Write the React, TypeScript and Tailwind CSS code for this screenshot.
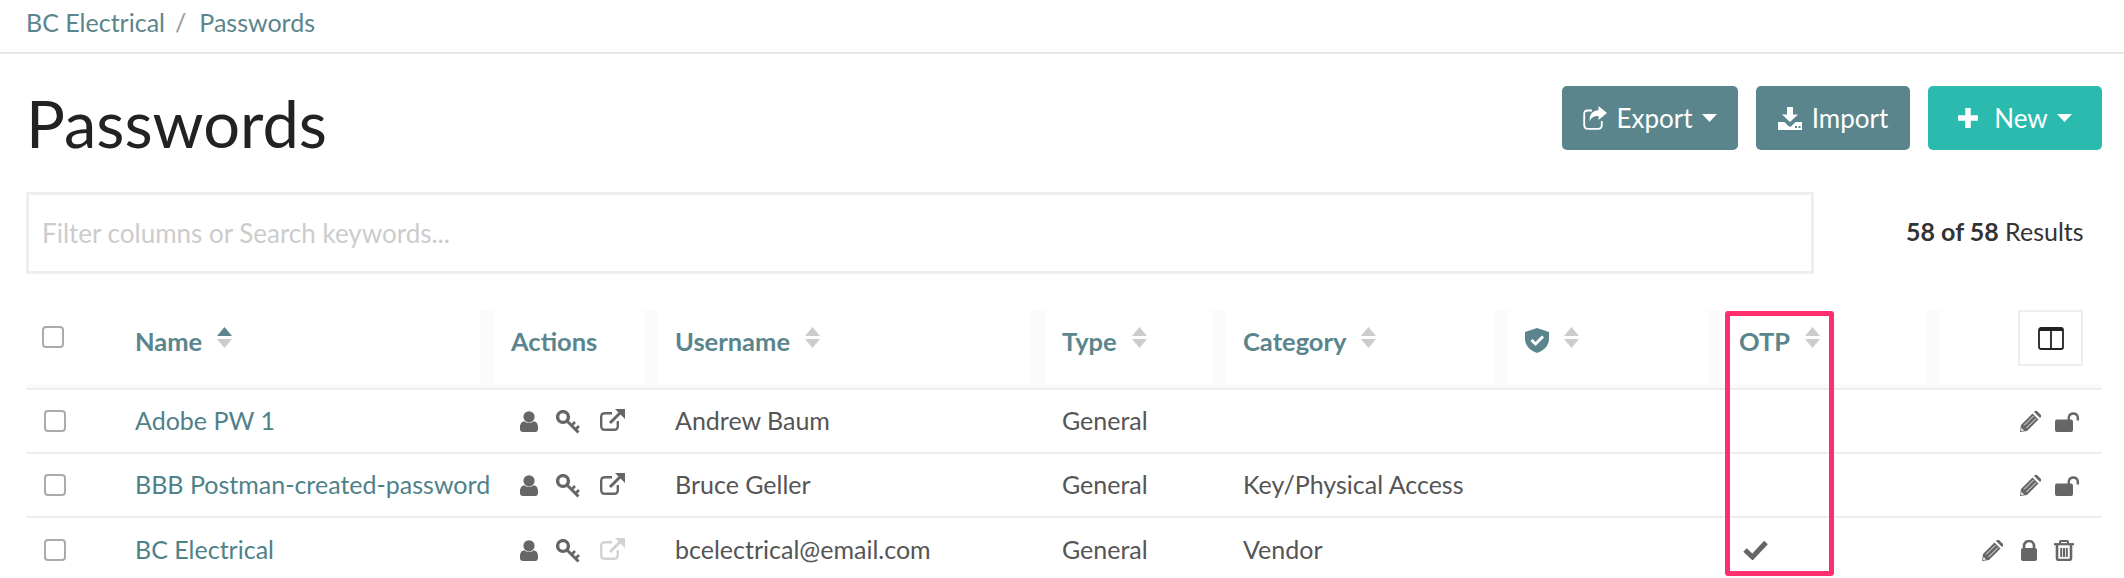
import React from "react";

const GRID = "grid grid-cols-[109px_359px_164px_387px_181px_282px_214px_218px_162px]";
const GREY = "#666666";

function Sort({ active = false }: { active?: boolean }) {
  return (
    <svg width="15" height="21" viewBox="0 0 15 21" className="ml-[15px] shrink-0">
      <polygon points="7.5,0 15,9 0,9" fill={active ? "#5a858d" : "#cccccc"} />
      <polygon points="0,12 15,12 7.5,21" fill="#cccccc" />
    </svg>
  );
}

function Caret() {
  return (
    <svg width="15" height="8" viewBox="0 0 15 8" className="shrink-0">
      <polygon points="0,0 15,0 7.5,8" fill="#ffffff" />
    </svg>
  );
}

function UserIcon() {
  return (
    <svg width="18" height="21" viewBox="0 0 18 21" className="shrink-0">
      <circle cx="9" cy="5.8" r="5.6" fill={GREY} />
      <path d="M0 16C0 12.5 2 10.3 4.4 10.2C6.5 12.2 11.5 12.2 13.6 10.2C16 10.3 18 12.5 18 16V18Q18 21 15 21H3Q0 21 0 18Z" fill={GREY} />
    </svg>
  );
}

function KeyIcon() {
  return (
    <svg width="24" height="24" viewBox="0 0 24 24" className="shrink-0 mt-[2px]" fill="none" stroke={GREY}>
      <ellipse cx="7" cy="7" rx="5.4" ry="5.4" strokeWidth="3.4" />
      <path d="M10.5 10.5L22.5 22.5" strokeWidth="3" />
      <path d="M15.5 15.5L19 12M19.5 19.5L23 16" strokeWidth="2.6" />
    </svg>
  );
}

function ExternalIcon({ color = GREY }: { color?: string }) {
  return (
    <svg width="25" height="22" viewBox="0 0 25 22" className="shrink-0 mt-[-3px]" fill="none" stroke={color}>
      <path d="M12 4.2H5Q1.2 4.2 1.2 8V17Q1.2 20.8 5 20.8H14Q17.8 20.8 17.8 17V12" strokeWidth="2.4" />
      <path d="M10 14L20 4" strokeWidth="3" />
      <polygon points="15,0 25,0 25,10" fill={color} stroke="none" />
    </svg>
  );
}

function PencilIcon() {
  return (
    <svg width="21" height="21" viewBox="0 0 21 21" className="shrink-0">
      <polygon points="1,14 12.5,2.5 18.5,8.5 7,20 0,21" fill={GREY} />
      <polygon points="14,1 15,0 17,0 21,4 21,6 20,7" fill={GREY} />
      <path d="M4 14.5L13.5 5M6.5 17L16 7.5" stroke="#ffffff" strokeWidth="0.9" />
      <polygon points="1.5,17 4,19.5 1,20" fill="#ffffff" />
    </svg>
  );
}

function UnlockIcon() {
  return (
    <svg width="24" height="21" viewBox="0 0 24 21" className="shrink-0">
      <rect x="0" y="8.5" width="18" height="12.5" rx="2" fill={GREY} />
      <path d="M13.8 9V6.2A4.6 4.6 0 0 1 22.8 6.2V9.5" fill="none" stroke={GREY} strokeWidth="2.4" />
    </svg>
  );
}

function LockIcon() {
  return (
    <svg width="16" height="21" viewBox="0 0 16 21" className="shrink-0">
      <rect x="0" y="8" width="16" height="13" rx="2" fill={GREY} />
      <path d="M3 9V6A5 5 0 0 1 13 6V9" fill="none" stroke={GREY} strokeWidth="2.6" />
    </svg>
  );
}

function TrashIcon() {
  return (
    <svg width="20" height="21" viewBox="0 0 20 21" className="shrink-0" fill="none" stroke={GREY}>
      <path d="M0 4.2H20" strokeWidth="2.2" />
      <path d="M6 4V2Q6 1 7 1H13Q14 1 14 2V4" strokeWidth="2" />
      <path d="M3 4.5V18Q3 20 5 20H15Q17 20 17 18V4.5" strokeWidth="2.6" />
      <path d="M7.2 8V17M10 8V17M12.8 8V17" strokeWidth="2" />
    </svg>
  );
}

function CheckIcon() {
  return (
    <svg width="25" height="20" viewBox="0 0 25 20" className="shrink-0 ml-[4px]" fill="none" stroke={GREY}>
      <path d="M2 10L9.5 17L23 2.5" strokeWidth="5" />
    </svg>
  );
}

function ShieldIcon() {
  return (
    <svg width="24" height="25" viewBox="0 0 24 25" className="shrink-0">
      <path d="M12 0L24 4V11C24 18 18 23 12 25C6 23 0 18 0 11V4Z" fill="#5a858d" />
      <path d="M6.5 12L10.5 16L18 8.5" fill="none" stroke="#ffffff" strokeWidth="3" />
    </svg>
  );
}

function ExportIcon() {
  return (
    <svg width="24" height="24" viewBox="0 0 24 24" className="shrink-0" fill="none">
      <path d="M9 4.5H5Q1.2 4.5 1.2 8V19Q1.2 22.8 5 22.8H15Q18.8 22.8 18.8 19V15" stroke="#ffffff" strokeWidth="1.8" />
      <path d="M15.5 0L24 7L15.5 14V10C11 10 8 11.5 6.8 15.5C6 9 9 4.5 15.5 4.2Z" fill="#ffffff" />
    </svg>
  );
}

function ImportIcon() {
  return (
    <svg width="24" height="23" viewBox="0 0 24 23" className="shrink-0">
      <path d="M9 0H15V7.5H20L12 15L4 7.5H9Z" fill="#ffffff" />
      <path d="M0 15H6.5L11 19.5H13L17.5 15H24V23H0Z" fill="#ffffff" />
      <rect x="17" y="19" width="2" height="2" fill="#5a858d" />
      <rect x="20.5" y="19" width="2" height="2" fill="#5a858d" />
    </svg>
  );
}

function PlusIcon() {
  return (
    <svg width="20" height="20" viewBox="0 0 20 20" className="shrink-0" fill="none" stroke="#ffffff">
      <path d="M0 10H20M10 0V20" strokeWidth="5.5" />
    </svg>
  );
}

function ColumnsIcon() {
  return (
    <svg width="26" height="23" viewBox="0 0 26 23" fill="none" stroke="#222222">
      <rect x="1" y="1" width="24" height="21" rx="2" strokeWidth="1.8" />
      <path d="M1 2.5H25" strokeWidth="3" />
      <path d="M13 2V22" strokeWidth="1.8" />
    </svg>
  );
}

function Checkbox({ className }: { className: string }) {
  return <div className={`w-[22px] h-[22px] border-2 border-[#aaaaaa] rounded-[4px] bg-white ${className}`} />;
}

const HEAD = "border-r-[14px] border-[#fbfbfb] pt-[16px] flex items-start h-[74px] text-[25.5px] leading-[30px] font-bold text-[#5a858d]";
const CELL = "flex items-center text-[25px] text-[#555555] whitespace-nowrap";

function Row({
  name,
  user,
  type,
  category,
  otp,
  linkDisabled,
  locked,
  last,
}: {
  name: string;
  user: string;
  type: string;
  category?: string;
  otp?: boolean;
  linkDisabled?: boolean;
  locked?: boolean;
  last?: boolean;
}) {
  return (
    <div className={`${GRID} h-[64px] ${last ? "" : "border-b-2 border-[#eeeeee]"}`}>
      <div className="flex items-center pl-[18px]">
        <Checkbox className="mt-[-1px]" />
      </div>
      <div className="flex items-center text-[25px] text-[#4f8189] whitespace-nowrap">{name}</div>
      <div className={`${CELL} pl-[26px]`}>
        <UserIcon />
        <div className="ml-[18px] flex">
          <KeyIcon />
        </div>
        <div className="ml-[20px] flex">
          <ExternalIcon color={linkDisabled ? "#d2d2d2" : GREY} />
        </div>
      </div>
      <div className={`${CELL} pl-[17px]`}>{user}</div>
      <div className={`${CELL} pl-[17px]`}>{type}</div>
      <div className={`${CELL} pl-[17px]`}>{category}</div>
      <div className={`${CELL} pl-[17px]`} />
      <div className={`${CELL} pl-[17px]`}>{otp ? <CheckIcon /> : null}</div>
      {locked ? (
        <div className="flex items-center justify-end pr-[28px]">
          <PencilIcon />
          <div className="ml-[18px] flex">
            <LockIcon />
          </div>
          <div className="ml-[17px] flex">
            <TrashIcon />
          </div>
        </div>
      ) : (
        <div className="flex items-center justify-end pr-[23px]">
          <PencilIcon />
          <div className="ml-[14px] flex">
            <UnlockIcon />
          </div>
        </div>
      )}
    </div>
  );
}

export default function App() {
  return (
    <div className="relative h-[578px] w-[2124px] overflow-hidden bg-white font-['Lato','Liberation_Sans',sans-serif]">
      <div className="h-[54px] border-b-2 border-[#e8e8e8] pl-[26px] flex items-center pb-[6px] text-[25px] text-[#5a858d]">
        <span>BC Electrical</span>
        <span className="ml-[10px] text-[#999999]">/</span>
        <span className="ml-[13px]">Passwords</span>
      </div>

      <div className="px-[22px] pl-[26px] h-[96px] pt-[32px] flex justify-between items-start">
        <h1 className="text-[65px] leading-[72px] mt-[1px] text-[#222222] font-normal">Passwords</h1>
        <div className="flex gap-[18px] text-[26px] text-white">
          <button className="w-[176px] h-[64px] rounded-[5px] bg-[#5a858d] flex items-center justify-center gap-[9px]">
            <ExportIcon />
            <span>Export</span>
            <Caret />
          </button>
          <button className="w-[154px] h-[64px] rounded-[5px] bg-[#5a858d] flex items-center justify-center gap-[10px]">
            <ImportIcon />
            <span>Import</span>
          </button>
          <button className="w-[174px] h-[64px] rounded-[5px] bg-[#2bbaae] flex items-center justify-center">
            <PlusIcon />
            <span className="ml-[16px] mr-[9px]">New</span>
            <Caret />
          </button>
        </div>
      </div>

      <div className="mt-[42px] pl-[26px] flex items-center h-[82px]">
        <input
          placeholder="Filter columns or Search keywords..."
          className="w-[1788px] h-[82px] border-[3px] border-[#eeeeee] pl-[13px] text-[26px] placeholder:text-[#cccccc] outline-none"
        />
        <div className="ml-[92px] mb-[3px] text-[25px] text-[#333333] whitespace-nowrap">
          <span className="font-bold">58 of 58</span> Results
        </div>
      </div>

      <div className="mt-[36px] ml-[26px] w-[2076px]">
        <div className={GRID}>
          <div className="pl-[16px] pt-[16px]">
            <Checkbox className="" />
          </div>
          <div className={HEAD}>
            <span>Name</span>
            <span className="mt-[1px] flex">
              <Sort active />
            </span>
          </div>
          <div className={`${HEAD} pl-[17px]`}>Actions</div>
          <div className={`${HEAD} pl-[17px]`}>
            <span>Username</span>
            <span className="mt-[1px] flex">
              <Sort />
            </span>
          </div>
          <div className={`${HEAD} pl-[17px]`}>
            <span>Type</span>
            <span className="mt-[1px] flex">
              <Sort />
            </span>
          </div>
          <div className={`${HEAD} pl-[17px]`}>
            <span>Category</span>
            <span className="mt-[1px] flex">
              <Sort />
            </span>
          </div>
          <div className={`${HEAD} pl-[17px]`}>
            <span className="mt-[2px] flex">
              <ShieldIcon />
            </span>
            <span className="mt-[1px] flex">
              <Sort />
            </span>
          </div>
          <div className={`${HEAD} pl-[17px]`}>
            <span>OTP</span>
            <span className="mt-[1px] flex">
              <Sort />
            </span>
          </div>
          <div className="flex justify-end items-start pr-[19px]">
            <button className="w-[65px] h-[56px] border-2 border-[#eeeeee] flex items-center justify-center">
              <ColumnsIcon />
            </button>
          </div>
        </div>
        <div className="h-[4px] bg-[#f9f9f9]" />
        <div className="h-[2px] bg-[#eeeeee] shadow-[0_6px_10px_rgba(0,0,0,0.02)]" />
        <Row name="Adobe PW 1" user="Andrew Baum" type="General" />
        <Row name="BBB Postman-created-password" user="Bruce Geller" type="General" category="Key/Physical Access" />
        <Row name="BC Electrical" user="bcelectrical@email.com" type="General" category="Vendor" otp linkDisabled locked last />
      </div>

      <div className="absolute left-[1725px] top-[311px] w-[109px] h-[265px] border-[5px] border-[#ff2e6e] rounded-[3px]" />
    </div>
  );
}
